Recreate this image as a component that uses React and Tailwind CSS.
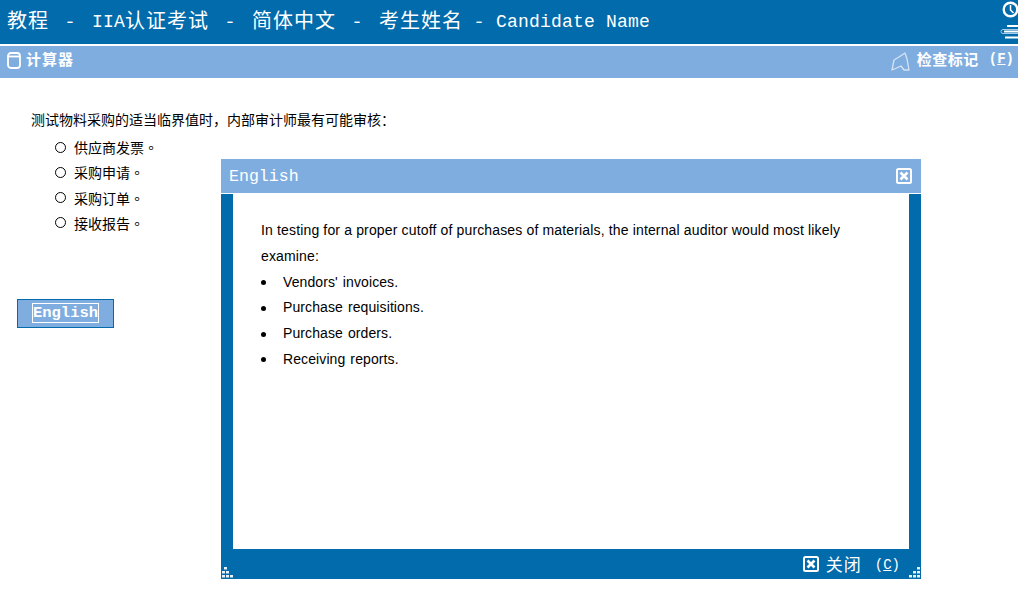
const cjk = "font-['Noto_Sans_CJK_SC',sans-serif]";
const mono = "font-['Liberation_Mono',monospace]";

function XBox({ className }) {
  return (
    <svg className={className} viewBox="0 0 16 16" fill="none" stroke="#fff">
      <rect x="1" y="1" width="14" height="14" rx="1.5" strokeWidth="2" />
      <path d="M4.5 4.5 L11.5 11.5 M11.5 4.5 L4.5 11.5" strokeWidth="2.6" />
    </svg>
  );
}

function Grip({ flip }) {
  const dots = flip
    ? [[8, 0], [4, 4], [8, 4], [0, 8], [4, 8], [8, 8]]
    : [[2, 0], [0, 4], [4, 4], [0, 8], [4, 8], [8, 8]];
  return (
    <svg width="11" height="11" viewBox="0 0 11 11" className="block">
      {dots.map(([x, y], i) => (
        <rect key={i} x={x} y={y} width="3" height="2.5" fill="#e8f0f8" />
      ))}
    </svg>
  );
}

function Dash({ className }) {
  return <span className={`inline-block text-center ${className}`}>-</span>;
}

const options = ["供应商发票", "采购申请", "采购订单", "接收报告"];
const bullets = ["Vendors' invoices.", "Purchase requisitions.", "Purchase orders.", "Receiving reports."];

export default function App() {
  return (
    <div className={`relative h-[594px] w-[1018px] overflow-hidden bg-white ${cjk}`}>
      <header className="relative h-11 overflow-hidden bg-[#016bab] pl-[7px] text-[20px] leading-[40px] tracking-[1px] whitespace-pre text-white">
        <span>教程</span>
        <Dash className="w-[43px]" />
        <span className={`${mono} text-[18px] tracking-[0.2px] [vertical-align:1px]`}>IIA</span>
        <span>认证考试</span>
        <Dash className="w-[43px]" />
        <span>简体中文</span>
        <Dash className="w-[43px]" />
        <span>考生姓名</span>
        <Dash className="w-[33px]" />
        <span className={`${mono} text-[18px] tracking-[0.2px] [vertical-align:1px]`}>Candidate Name</span>
        <svg width="18" height="44" viewBox="0 0 18 44" fill="none" className="absolute top-0 left-[1000px]">
          <circle cx="10.5" cy="9.5" r="6.8" stroke="#fff" strokeWidth="2.4" />
          <path d="M10.5 5 V10 L13.5 13" stroke="#fff" strokeWidth="1.5" />
          <path d="M7 26 H18 M5 37.5 H18" stroke="#fff" strokeWidth="2" />
          <path d="M18 29.5 H3 Q1 29.5 1 31.5 Q1 33.5 3 33.5 H18" stroke="#a8cce8" strokeWidth="1" />
          <path d="M4 31.5 H18" stroke="#fff" strokeWidth="2" />
        </svg>
      </header>

      <div className="mt-[2px] flex h-8 items-center justify-between bg-[#7fade0] pl-[7px] pb-[5px] text-white">
        <div className="flex items-center gap-[5px] text-[15px] font-bold tracking-[1px]">
          <svg width="14" height="17" viewBox="0 0 14 17" fill="none" stroke="#fff" strokeWidth="1.8" className="mt-[2px]">
            <rect x="1" y="1" width="12" height="15" rx="3" />
            <path d="M1 4.5 H13" />
          </svg>
          <span>计算器</span>
        </div>
        <div className="flex items-center pr-[4px] text-[15px] font-bold tracking-[0.5px] whitespace-pre">
          <svg width="20" height="20" viewBox="0 0 20 20" fill="none" stroke="#d5e4f4" strokeWidth="1.3" className="mt-[5px] mr-[5px]">
            <path d="M2 18 L4 8 L9 5 L15 1 L17 7 L19 18 L14 18 L11 14 Z" strokeLinejoin="round" />
          </svg>
          <span className="ml-[2px]">检查标记</span>
          <span className={`ml-[10px] ${mono} text-[14px] tracking-[0px]`}>(<u>F</u>)</span>
        </div>
      </div>

      <main className="pt-[33px] pl-[17px] text-[14px] text-black">
        <p className="h-[18px] pl-[14px] leading-[16px]">测试物料采购的适当临界值时{"\uFF0C"}内部审计师最有可能审核{"\uFF1A"}</p>
        <ul className="mt-[10px] flex flex-col gap-[7.3px] pl-[38px]">
          {options.map((o) => (
            <li key={o} className="flex h-[18px] items-center gap-[8px] pb-[2px] leading-[16px]">
              <span className="box-border size-[11px] rounded-full border border-black" />
              <span>{o}<span className="font-['Noto_Sans_CJK_TC',sans-serif]">。</span></span>
            </li>
          ))}
        </ul>
        <div className="mt-[66px] flex h-[29px] w-[97px] items-center justify-center border border-[#016bab] bg-[#7fade0]">
          <span className={`flex h-[20px] items-center border border-white ${mono} text-[15.5px] font-bold text-white`}>English</span>
        </div>
      </main>

      <section className="absolute top-[159px] left-[221px] flex h-[420px] w-[700px] flex-col bg-[#016bab]">
        <div className="flex h-[34px] items-center justify-between bg-[#7fade0] pr-[9px] pl-[8px] text-white">
          <span className={`${mono} pt-[3px] text-[16.6px]`}>English</span>
          <XBox className="size-[16px]" />
        </div>
        <div className="h-px bg-white" />
        <div className="mx-3 h-[355px] bg-white pt-[24px] pr-[60px] pl-[28px] font-['Liberation_Sans',sans-serif] text-[14px] leading-[25.8px] text-black">
          <p className="tracking-[0.15px]">In testing for a proper cutoff of purchases of materials, the internal auditor would most likely examine:</p>
          <ul>
            {bullets.map((b) => (
              <li key={b} className="flex items-center whitespace-pre">
                <span className="size-[5px] rounded-full bg-black" />
                <span className="ml-[17px] tracking-[0.1px] [word-spacing:1px]">{b}</span>
              </li>
            ))}
          </ul>
        </div>
        <div className="relative flex h-[30px] items-center justify-end pr-[21px] text-[17px] tracking-[1px] whitespace-pre text-white">
          <XBox className="mr-[7px] size-[16px]" />
          <span>关闭</span>
          <span className={`ml-[13px] pt-[2px] ${mono} text-[14px] tracking-[0px]`}>(<u>C</u>)</span>
          <div className="absolute bottom-[1px] left-[1px]"><Grip /></div>
          <div className="absolute right-[1px] bottom-[1px]"><Grip flip /></div>
        </div>
      </section>
    </div>
  );
}
